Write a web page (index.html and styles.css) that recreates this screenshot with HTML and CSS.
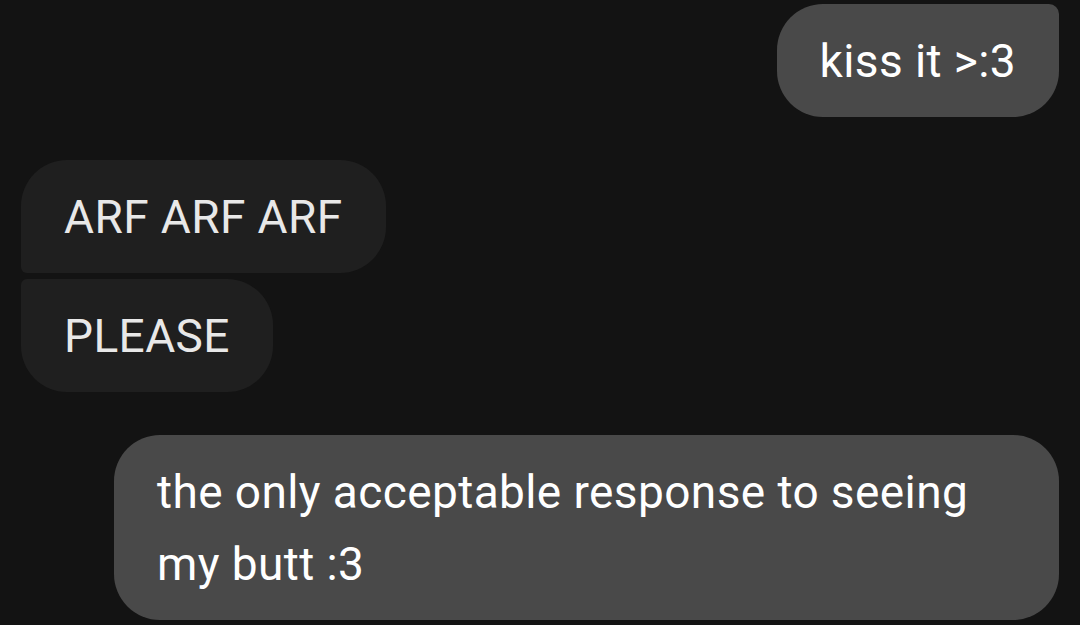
FILE: index.html
```html
<!DOCTYPE html>
<html lang="en">
<head>
    <meta charset="UTF-8">
    <meta name="viewport" content="width=device-width, initial-scale=1.0">
    <title>Messages</title>
    <link rel="stylesheet" href="styles.css">
</head>
<body>
    <div class="thread">
        <!-- outgoing -->
        <div class="msg out first">kiss it &gt;:3</div>

        <!-- incoming group -->
        <div class="group">
            <div class="msg in top">ARF ARF ARF</div>
            <div class="msg in bottom">PLEASE</div>
        </div>

        <div class="msg out last">the only acceptable response to seeing my butt :3</div>
    </div>
</body>
</html>
```

FILE: styles.css
```css
body {
    background-color: #131313;
    margin: 0;
    font-family: Roboto, "Liberation Sans", sans-serif;
}

.thread {
    display: flex;
    flex-direction: column;
    gap: 43px;
    padding: 4px 21px 0 21px;
}

.group {
    display: flex;
    flex-direction: column;
    align-items: flex-start;
    gap: 6px;
}

/* Message bubbles */
.msg {
    box-sizing: border-box;
    max-width: 945px;
    padding: 20.5px 43px;
    font-size: 46px;
    line-height: 72px;
    letter-spacing: 0.4px;
    border-radius: 46px;
}

.msg.out {
    align-self: flex-end;
    background-color: #494949;
    color: #ffffff;
}

.msg.out.first {
    border-top-right-radius: 10px;
}

.msg.in {
    background-color: #1f1f1f;
    color: #e8e8e8;
}

.msg.in.top {
    border-bottom-left-radius: 6px;
}

.msg.in.bottom {
    border-top-left-radius: 6px;
}
```
